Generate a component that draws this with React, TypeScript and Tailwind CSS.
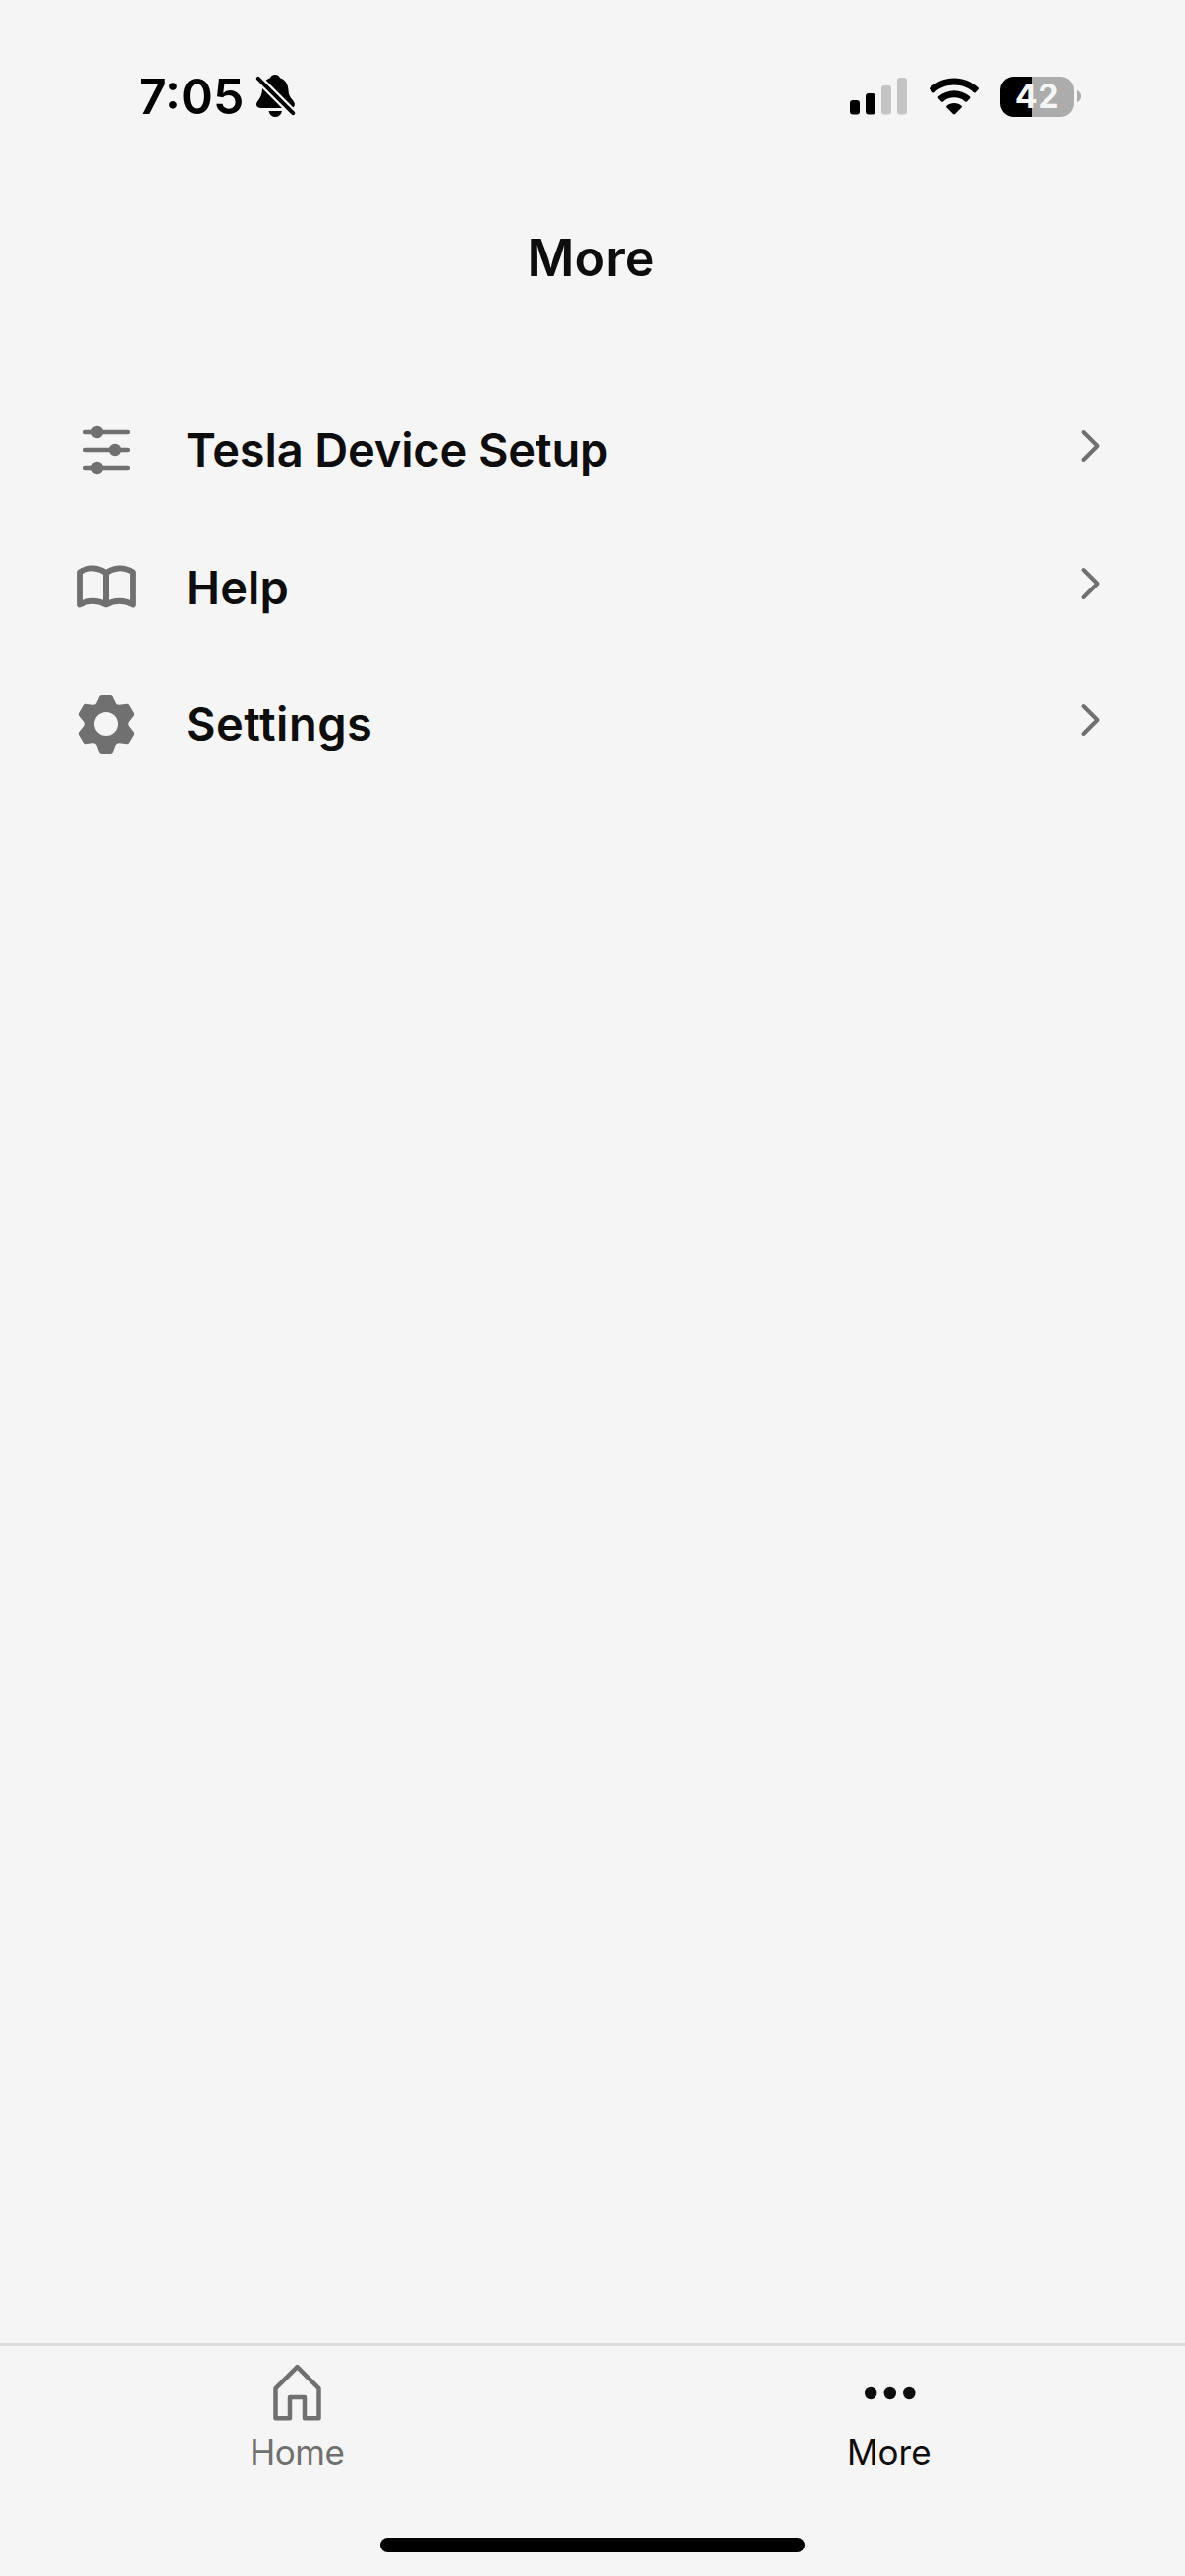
import type { ReactNode } from 'react'

function StatusBar() {
  return (
    <header className="flex h-[196px] items-center justify-between pl-[141px] pr-[106px]">
      <div className="flex items-center gap-[11px]">
        <span className="text-[50px] leading-none font-semibold text-black">7:05</span>
        <BellOffIcon />
      </div>

      <div className="flex items-center">
        <SignalIcon />
        <WifiIcon />
        <Battery level="42" />
      </div>
    </header>
  )
}

function BellOffIcon() {
  return (
    <svg width="42" height="44" viewBox="0 0 42 44" aria-hidden="true">
      <path
        d="M6 34C3 34 1 32.800 1 30.500C1 26.500 6.500 25 7 15C7.300 6.500 12 4.500 15 3.200C16 1 17.700 0 20 0C22.300 0 24 1 25 3.200C30 5 33.300 9 33.600 17C33.800 23 38 25 39.500 28.500C40.500 31 39.500 34 36 34H6Z"
        fill="#000"
      />
      <path d="M-2 -1L44 45" stroke="#f5f5f5" strokeWidth="8.500" />
      <path d="M13.500 37H27C26 41 23.500 43 20.200 43C17 43 14.500 41 13.500 37Z" fill="#000" />
      <path d="M2.800 3.800L38.200 39.200" stroke="#000" strokeWidth="4" strokeLinecap="round" />
    </svg>
  )
}

function SignalIcon() {
  return (
    <svg width="58" height="38" viewBox="0 0 58 38" className="mr-[23px]" aria-hidden="true">
      <rect x="0" y="23" width="10" height="14.500" rx="3" fill="#000" />
      <rect x="16" y="16" width="10" height="21.500" rx="3" fill="#000" />
      <rect x="32" y="8" width="10" height="29.500" rx="3" fill="#c4c4c4" />
      <rect x="48" y="0" width="10" height="37.500" rx="3" fill="#c4c4c4" />
    </svg>
  )
}

function WifiIcon() {
  return (
    <svg width="50" height="38" viewBox="0 0 50 38" className="mr-[22px]" fill="#000" aria-hidden="true">
      <path d="M25 0.500C34.500 0.500 43 4.200 49.500 10.200Q50.500 11.200 49.500 12.200L46.600 15.200Q45.800 16 44.900 15.200C39.500 10.300 32.600 7.600 25 7.600C17.400 7.600 10.500 10.300 5.100 15.200Q4.200 16 3.400 15.200L0.500 12.200Q-0.500 11.200 0.500 10.200C7 4.200 15.500 0.500 25 0.500Z" />
      <path d="M25 13.200C31 13.200 36.600 15.500 41 19.300Q42 20.300 41 21.300L37.900 24.400Q37 25.200 36.100 24.400C33.100 21.800 29.200 20.300 25 20.300C20.800 20.300 16.900 21.800 13.900 24.400Q13 25.200 12.100 24.400L9 21.300Q8 20.300 9 19.300C13.400 15.500 19 13.200 25 13.200Z" />
      <path d="M25 26C28 26 30.500 27 32.500 28.700Q33.400 29.600 32.500 30.600L26 37.100Q25 38 24 37.100L17.500 30.600Q16.600 29.600 17.500 28.700C19.500 27 22 26 25 26Z" />
    </svg>
  )
}

function Battery({ level }: { level: string }) {
  return (
    <div className="flex items-center">
      <div className="flex h-[41px] w-[75px] items-center justify-center rounded-[14px] bg-[linear-gradient(to_right,#000_32px,#acacac_32px)]">
        <span className="text-[34px] leading-none font-bold tracking-[0.5px] text-[#f5f5f5]">{level}</span>
      </div>
      <svg width="4" height="12" viewBox="0 0 4 12" className="ml-[3px]" aria-hidden="true">
        <path d="M0 0C2.500 1 4 3.300 4 6C4 8.700 2.500 11 0 12Z" fill="#acacac" />
      </svg>
    </div>
  )
}

function SlidersIcon() {
  return (
    <svg width="60" height="60" viewBox="0 0 60 60" aria-hidden="true">
      <path d="M8.200 12H51.800M8.200 30H51.800M8.200 48H51.800" stroke="#707070" strokeWidth="4.600" strokeLinecap="round" />
      <circle cx="21" cy="12" r="6.200" fill="#707070" />
      <circle cx="39" cy="30" r="6.200" fill="#707070" />
      <circle cx="21" cy="48" r="6.200" fill="#707070" />
    </svg>
  )
}

function BookIcon() {
  return (
    <svg
      width="60"
      height="60"
      viewBox="0 0 60 60"
      fill="none"
      stroke="#707070"
      strokeLinecap="round"
      strokeLinejoin="round"
      aria-hidden="true"
    >
      <path
        d="M30 16.500C23 10.500 12 9.500 3 15.500V48.500C11.500 43.800 21.500 43.800 30 48.500C38.500 43.800 48.500 43.800 57 48.500V15.500C48 9.500 37 10.500 30 16.500Z"
        strokeWidth="5.800"
      />
      <path d="M30 16.500V48" strokeWidth="6" />
    </svg>
  )
}

function GearIcon() {
  return (
    <svg width="60" height="60" viewBox="0 0 60 60" aria-hidden="true">
      <path
        fillRule="evenodd"
        fill="#707070"
        d="M25.500 0H34.500Q36.300 0 37 1.700L39.400 8.200Q40.500 11.200 43.500 10.800L50.500 9.800Q52.300 9.600 53.200 11.100L57.900 19.100Q58.700 20.600 57.600 22L53.200 27.500Q51.300 30 53.200 32.500L57.600 38Q58.700 39.400 57.900 40.900L53.200 48.900Q52.300 50.400 50.500 50.200L43.500 49.200Q40.500 48.800 39.400 51.800L37 58.300Q36.300 60 34.500 60H25.500Q23.700 60 23 58.300L20.600 51.800Q19.500 48.800 16.500 49.200L9.500 50.200Q7.700 50.400 6.800 48.900L2.100 40.900Q1.300 39.400 2.400 38L6.800 32.500Q8.700 30 6.800 27.500L2.400 22Q1.300 20.600 2.100 19.100L6.800 11.100Q7.700 9.600 9.500 9.800L16.500 10.800Q19.500 11.200 20.600 8.200L23 1.700Q23.700 0 25.500 0ZM30 18A12 12 0 1 0 30 42A12 12 0 1 0 30 18Z"
      />
    </svg>
  )
}

function ChevronIcon() {
  return (
    <svg width="22" height="36" viewBox="0 0 22 36" className="mb-[7px]" fill="none" aria-hidden="true">
      <path
        d="M4.500 4L18.500 18L4.500 32"
        stroke="#707070"
        strokeWidth="4"
        strokeLinecap="round"
        strokeLinejoin="round"
      />
    </svg>
  )
}

function HomeIcon() {
  return (
    <svg width="50" height="58" viewBox="0 0 50 58" fill="none" aria-hidden="true">
      <path
        d="M25.500 3.200L47.500 25.200V55.200H33V34H18V55.200H3.500V25.200Z"
        stroke="#707070"
        strokeWidth="4.500"
        strokeLinejoin="round"
      />
    </svg>
  )
}

function DotsIcon() {
  return (
    <svg width="54" height="58" viewBox="0 0 54 58" fill="#0d0d0d" aria-hidden="true">
      <circle cx="8.200" cy="30" r="6.200" />
      <circle cx="27.800" cy="30" r="6.200" />
      <circle cx="47.300" cy="30" r="6.200" />
    </svg>
  )
}

const menuItems: { label: string; icon: ReactNode; className: string }[] = [
  { label: 'Tesla Device Setup', icon: <SlidersIcon />, className: 'tracking-[-0.15px]' },
  { label: 'Help', icon: <BookIcon />, className: 'tracking-[0.1px]' },
  { label: 'Settings', icon: <GearIcon />, className: 'tracking-[0.5px]' },
]

export default function App() {
  return (
    <div className="flex h-[2622px] w-[1206px] flex-col overflow-hidden bg-[#f5f5f5] font-['Inter',sans-serif] text-[#0d0d0d]">
      <StatusBar />

      <div className="flex h-[132px] items-center justify-center pt-[2px] pr-[3px]">
        <h1 className="text-[52px] leading-none font-semibold">More</h1>
      </div>

      {/* Menu */}
      <main className="flex-1 pt-[60px]">
        {menuItems.map((item) => (
          <button key={item.label} className="flex h-[139.5px] w-full items-center pr-[86px] pl-[78px] text-left">
            {item.icon}
            <span className={`ml-[51px] flex-1 text-[47px] leading-none font-semibold ${item.className}`}>
              {item.label}
            </span>
            <ChevronIcon />
          </button>
        ))}
      </main>

      {/* Tab bar */}
      <nav className="flex h-[237px] flex-col border-t-[3px] border-[#dcdcdc]">
        <div className="grid flex-1 grid-cols-2 pl-[1px]">
          <button className="flex flex-col items-center pt-[18px] text-[#707070]">
            <HomeIcon />
            <span className="mt-[15px] text-[35px] leading-[35px] font-normal tracking-[-0.5px]">Home</span>
          </button>
          <button className="flex flex-col items-center pt-[18px]">
            <DotsIcon />
            <span className="mt-[15px] text-[35px] leading-[35px] font-normal">More</span>
          </button>
        </div>
        <div className="mx-auto mb-[24px] h-[15px] w-[432px] rounded-full bg-black" />
      </nav>
    </div>
  )
}
